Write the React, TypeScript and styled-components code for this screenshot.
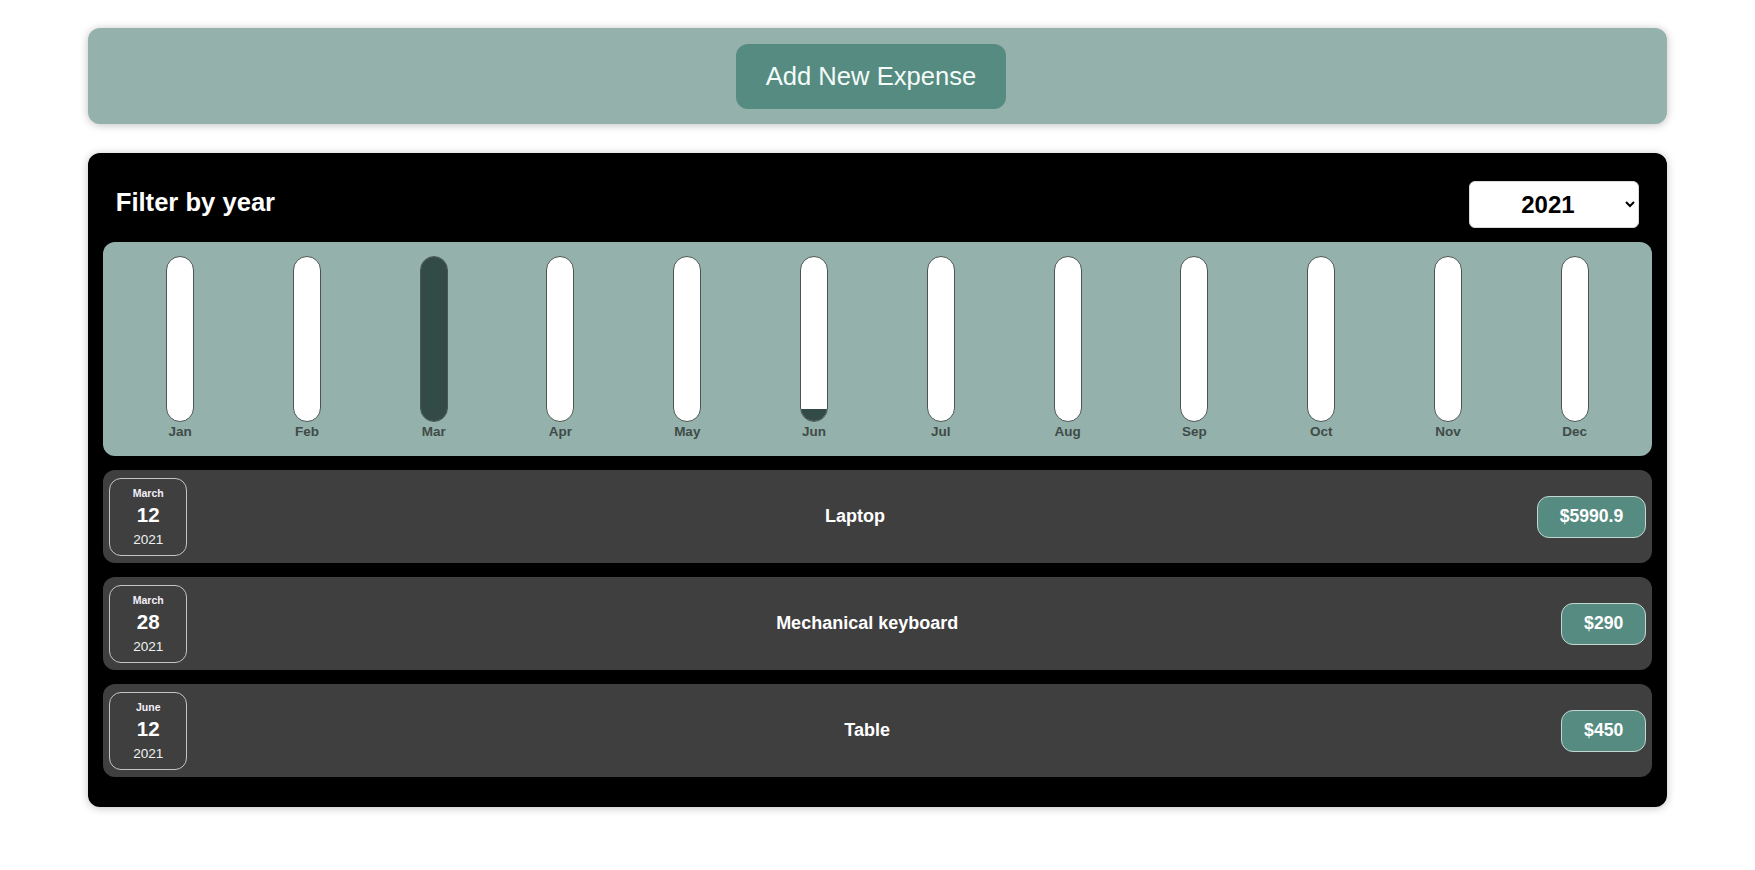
import React, { useState } from "react";
import styled, { createGlobalStyle } from "styled-components";

const GlobalStyle = createGlobalStyle`
  * { box-sizing: border-box; }
  html, body { margin: 0; padding: 0; background: #ffffff; }
  body { font-family: "Liberation Sans", Arial, Helvetica, sans-serif; }
`;

const Page = styled.div`
  display: flex;
  flex-direction: column;
  align-items: center;
  padding: 28px 0;
`;

const NewExpensePanel = styled.div`
  width: 90%;
  display: flex;
  justify-content: center;
  padding: 15.5px 0 15px;
  background-color: #95b1ab;
  border-radius: 12px;
  box-shadow: 0 1px 8px rgba(0, 0, 0, 0.25);
`;

const AddButton = styled.button`
  font-family: inherit;
  font-size: 25.6px;
  line-height: normal;
  cursor: pointer;
  padding: 18px 30px;
  margin-right: 13px;
  border: none;
  background-color: #558b80;
  color: #f4fbf9;
  border-radius: 12px;
`;

const ExpensesCard = styled.div`
  width: 90%;
  margin-top: 29px;
  padding: 15px 15px 16px;
  background-color: #000000;
  border-radius: 12px;
  box-shadow: 0 1px 8px rgba(0, 0, 0, 0.25);
`;

const FilterRow = styled.div`
  display: flex;
  align-items: center;
  justify-content: space-between;
  margin: 13px 0 14px;
  padding: 0 13px 0 13px;
  color: #ffffff;
`;

const FilterLabel = styled.label`
  font-weight: bold;
  font-size: 25.6px;
  margin-bottom: 4px;
`;

const YearSelect = styled.select`
  font-family: inherit;
  font-size: 24px;
  font-weight: bold;
  padding: 8px 47px;
  border-radius: 6px;
  border: 1px solid #d9d9d9;
  background-color: #ffffff;
  color: #000000;
`;

const Chart = styled.div`
  display: flex;
  justify-content: space-around;
  padding: 14px 14px 17.5px;
  border-radius: 12px;
  background-color: #95b1ab;
`;

const BarColumn = styled.div`
  display: flex;
  flex-direction: column;
  align-items: center;
  width: 28px;
`;

const BarInner = styled.div`
  height: 166px;
  width: 28px;
  border: 1px solid #4d5553;
  border-radius: 14px;
  background-color: #ffffff;
  overflow: hidden;
  display: flex;
  flex-direction: column;
  justify-content: flex-end;
`;

const BarFill = styled.div`
  width: 100%;
  background-color: #324b46;
`;

const BarLabel = styled.div`
  margin-top: 2px;
  font-weight: bold;
  font-size: 13.5px;
  color: #3f4b48;
  white-space: nowrap;
`;

const ItemList = styled.ul`
  list-style: none;
  margin: 0;
  padding: 0;
`;

const Item = styled.li`
  display: flex;
  align-items: center;
  justify-content: space-between;
  margin: 14px 0;
  padding: 7.5px 6px 7.5px 6.5px;
  border-radius: 12px;
  background-color: #3f3f3f;
`;

const DateBox = styled.div`
  display: flex;
  flex-direction: column;
  align-items: center;
  justify-content: center;
  gap: 4.5px;
  width: 78px;
  height: 78px;
  flex-shrink: 0;
  border: 1px solid #c4c4c4;
  border-radius: 12px;
  background-color: #3f3f3f;
  color: #ffffff;
`;

const DateMonth = styled.div`
  font-size: 10.5px;
  font-weight: bold;
  color: #f3f0fa;
`;

const DateDay = styled.div`
  font-size: 20.5px;
  font-weight: bold;
`;

const DateYear = styled.div`
  font-size: 13.6px;
  color: #f0f0f0;
`;

const Description = styled.h2`
  flex: 1;
  margin: 0 30px 0 16px;
  font-size: 18px;
  font-weight: bold;
  color: #ffffff;
  text-align: center;
`;

const Price = styled.div`
  font-size: 17.6px;
  font-weight: bold;
  color: #ffffff;
  background-color: #558b80;
  border: 1px solid #c3d6d1;
  padding: 9.5px 22px;
  border-radius: 12px;
`;

type Expense = { id: string; title: string; amount: number; date: Date };

const expenses: Expense[] = [
  { id: "e1", title: "Laptop", amount: 5990.9, date: new Date(2021, 2, 12) },
  { id: "e2", title: "Mechanical keyboard", amount: 290, date: new Date(2021, 2, 28) },
  { id: "e3", title: "Table", amount: 450, date: new Date(2021, 5, 12) },
];

const MONTHS = ["Jan", "Feb", "Mar", "Apr", "May", "Jun", "Jul", "Aug", "Sep", "Oct", "Nov", "Dec"];
const LONG_MONTHS = [
  "January", "February", "March", "April", "May", "June",
  "July", "August", "September", "October", "November", "December",
];

export default function App() {
  const [year, setYear] = useState("2021");
  const filtered = expenses.filter((e) => e.date.getFullYear().toString() === year);
  const totals = MONTHS.map(() => 0);
  filtered.forEach((e) => {
    totals[e.date.getMonth()] += e.amount;
  });
  const max = Math.max(...totals);

  return (
    <>
      <GlobalStyle />
      <Page>
        <NewExpensePanel>
          <AddButton>Add New Expense</AddButton>
        </NewExpensePanel>
        <ExpensesCard>
          <FilterRow>
            <FilterLabel>Filter by year</FilterLabel>
            <YearSelect value={year} onChange={(e) => setYear(e.target.value)}>
              <option value="2022">2022</option>
              <option value="2021">2021</option>
              <option value="2020">2020</option>
              <option value="2019">2019</option>
            </YearSelect>
          </FilterRow>
          <Chart>
            {MONTHS.map((m, i) => (
              <BarColumn key={m}>
                <BarInner>
                  <BarFill style={{ height: max > 0 ? `${Math.round((totals[i] / max) * 100)}%` : "0%" }} />
                </BarInner>
                <BarLabel>{m}</BarLabel>
              </BarColumn>
            ))}
          </Chart>
          <ItemList>
            {filtered.map((e) => (
              <Item key={e.id}>
                <DateBox>
                  <DateMonth>{LONG_MONTHS[e.date.getMonth()]}</DateMonth>
                  <DateDay>{e.date.getDate()}</DateDay>
                  <DateYear>{e.date.getFullYear()}</DateYear>
                </DateBox>
                <Description>{e.title}</Description>
                <Price>${e.amount}</Price>
              </Item>
            ))}
          </ItemList>
        </ExpensesCard>
      </Page>
    </>
  );
}
